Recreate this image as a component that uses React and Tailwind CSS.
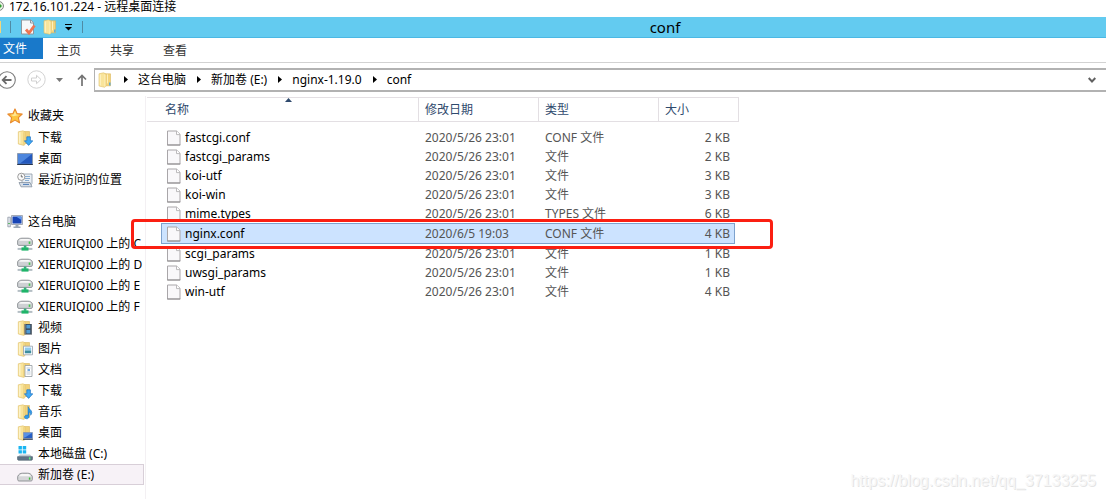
import React from "react";

/* ---------- icons ---------- */

function Svg({ children, className = "size-4", box = "0 0 16 16" }) {
  return (
    <svg viewBox={box} className={"shrink-0 " + className} aria-hidden="true">
      {children}
    </svg>
  );
}

function FolderShape() {
  return (
    <>
      <path d="M6 1.500h6.500v12H6z" fill="#f1d27a" stroke="#dcb75c" strokeWidth=".6" />
      <path d="M1.300 1.800 6 .8l2 1v12.700l-1.200.9L1.300 14z" fill="#f9e49b" stroke="#dfbf6a" strokeWidth=".6" />
      <path d="M2 2.500 3.500 2v11.500L2 13.200z" fill="#fdf3c8" />
      <path d="M6.800 2.200v12.600" stroke="#eccd74" strokeWidth=".9" />
    </>
  );
}

function FolderIcon({ className }) {
  return (
    <Svg className={className}>
      <path d="M7 1.800h6.500v12H7z" fill="#f3d47c" stroke="#dcb75c" strokeWidth=".6" />
      <path d="M2 1.800 6.500.8l2.200 1v12.600l-1 .9L2 14z" fill="#f9e49b" stroke="#dfbf6a" strokeWidth=".6" />
      <path d="M3.300 2.500v11" stroke="#fdf3c8" />
      <path d="M8 2.500v12M10.500 2.400v9" stroke="#fff3c4" strokeWidth=".9" />
      <path d="M12.800 10.500v3" stroke="#52a9dc" strokeWidth="1.400" />
    </Svg>
  );
}

function DownloadIcon() {
  return (
    <Svg>
      <FolderShape />
      <path d="M9.800 6.800h3.600v4h2.400l-4.200 4.600-4.200-4.600h2.400z" fill="#3fa9f5" stroke="#1a6fc0" strokeWidth=".7" />
    </Svg>
  );
}

function DesktopIcon() {
  return (
    <Svg>
      <path d="M.5 2.500h15v10.800H.5z" fill="#2459bd" stroke="#8d9bb0" />
      <path d="M1 3h14L3 12.600H1z" fill="#4d86dd" />
      <path d="M.2 13h15.600v1H.2z" fill="#27364f" />
    </Svg>
  );
}

function RecentIcon() {
  return (
    <Svg>
      <path d="M5 2h10v9.500l-1.200 1.500H5z" fill="#e9eff5" stroke="#8d99a6" strokeWidth=".8" />
      <path d="M8 4.500h5M8 6.500h5M8 8.500h4" stroke="#7fa6ce" strokeWidth=".9" />
      <path d="M2 10.500h11l2 4.300H4z" fill="#d5dde6" stroke="#8592a0" strokeWidth=".8" />
      <path d="M6 12.400h6" stroke="#4b7cb8" />
      <circle cx="4.300" cy="4.800" r="3.600" fill="#fbfbfb" stroke="#9b9b9b" />
      <path d="M4.300 2.700v2.200H6" stroke="#555" strokeWidth=".8" fill="none" />
    </Svg>
  );
}

function StarIcon() {
  return (
    <Svg>
      <path
        d="M8 .9 10.100 5.600l5.100.5-3.800 3.500 1.100 5.200L8 12.100l-4.500 2.700 1.100-5.200L.8 6.100l5.100-.5z"
        fill="#fdc53f"
        stroke="#e8882c"
        strokeWidth="1.100"
        strokeLinejoin="round"
      />
      <path d="M8 3.200 9.300 6.600l3 .3-5.800 1.400-2.800-1.500 2.900-.3z" fill="#ffe795" />
    </Svg>
  );
}

function ComputerIcon() {
  return (
    <Svg>
      <path d="M.8 3.200h2.600v9.600H.8z" fill="#dde2ea" stroke="#8b93a1" strokeWidth=".7" />
      <path d="M1.200 9.500h1.600" stroke="#45b14c" />
      <path d="M4.500 1.500h11v9h-11z" fill="#e7eaf0" stroke="#8f97a5" strokeWidth=".8" />
      <path d="M5.500 2.500h9v7h-9z" fill="#1744b6" />
      <path d="M9 2.500h5.500v3.400z" fill="#5f97ee" />
      <path d="M8.500 11h3v1.600h-3zM6.500 12.600h7v1.500h-7z" fill="#9ba7b5" />
    </Svg>
  );
}

function NetDriveIcon() {
  return (
    <Svg>
      <path d="M.6 4.800C1.300 3 3 2.200 5 2.200h6c2 0 3.700.8 4.400 2.600v3.500c0 .7-.6 1.100-1.300 1.100H1.900C1.200 9.400.6 9 .6 8.300z" fill="#cfd1d4" stroke="#7e8388" strokeWidth=".8" />
      <path d="M2 4.700C3 3.300 4 3 5.500 3h5c1.500 0 2.500.3 3.500 1.700z" fill="#f8f8f8" />
      <path d="M12.500 5.500v2.400" stroke="#41c64b" strokeWidth="1.600" />
      <path d="M6.800 9.600h2.600v2.300H6.800z" fill="#31b27a" />
      <path d="M.6 12.900h14.800" stroke="#b4bec4" strokeWidth="2" />
      <path d="M4.500 11.400h7v3.200h-7z" fill="#1fb469" />
    </Svg>
  );
}

function VideoIcon() {
  return (
    <Svg>
      <FolderShape />
      <path d="M7.500 4h7.500v10.500H7.500z" fill="#333d48" />
      <path d="M9.300 4.800h4v3.800h-4zM9.300 9.800h4v3.800h-4z" fill="#4e9bd6" />
      <path d="M8.300 4.500v9.800M14.300 4.500v9.800" stroke="#d6dce2" strokeWidth=".8" strokeDasharray="1 1" />
    </Svg>
  );
}

function PictureIcon() {
  return (
    <Svg>
      <FolderShape />
      <path d="M6.500 5.200h9v8.600h-9z" fill="#fff" stroke="#94a0ac" strokeWidth=".8" />
      <path d="M7.800 6.500h6.400v3H7.800z" fill="#8fcbed" />
      <path d="M7.800 9.500h6.400v2.800H7.800z" fill="#3d8e9f" />
    </Svg>
  );
}

function DocumentIcon() {
  return (
    <Svg>
      <FolderShape />
      <path d="M8 3.500h7v11H8z" fill="#fff" stroke="#9299a0" strokeWidth=".8" />
      <path d="M9.500 6h4M9.500 10h4M9.500 12h4" stroke="#aab7c4" strokeWidth=".8" />
      <path d="M10.500 8h2.500" stroke="#3b86cd" strokeWidth="1.400" />
    </Svg>
  );
}

function MusicIcon() {
  return (
    <Svg>
      <FolderShape />
      <path d="M11 2.500c.3 2.500 3.800 3 3.800 6 0 1.300-.7 2.200-1.200 2.800.3-2-.6-3-1.600-3.500v4.700c0 3-4.500 3-4.500.6 0-1.700 1.800-2.400 3.500-1.900z" fill="#2f9aea" stroke="#176bb5" strokeWidth=".5" />
    </Svg>
  );
}

function DesktopFolderIcon() {
  return (
    <Svg>
      <FolderShape />
      <path d="M6.500 7.500h9v6h-9z" fill="#275fc4" stroke="#8c9bb2" strokeWidth=".8" />
      <path d="M7 8h8l-7 4.500H7z" fill="#5a92e4" />
      <path d="M6 14.300h9.800" stroke="#24344f" />
    </Svg>
  );
}

function SystemDriveIcon() {
  return (
    <Svg>
      <path d="M1.500 0h3.400v3.400H1.500zM5.700 0h3.500v3.400H5.700zM1.500 4.200h3.400v3.400H1.500zM5.700 4.200h3.500v3.400H5.700z" fill="#19b5f1" />
      <path d="M3 8.600h10l2.500 2.400H.5z" fill="#bcc7cf" />
      <path d="M.5 10.700h15v2.200c0 .9-.5 1.400-1.300 1.400H1.800c-.8 0-1.300-.5-1.300-1.400z" fill="#5e7486" stroke="#536370" strokeWidth=".6" />
      <path d="M12.700 11.300v2.200" stroke="#5cf07f" strokeWidth="1.500" />
    </Svg>
  );
}

function DriveIcon() {
  return (
    <Svg>
      <path d="M.7 9.500C1.700 7 3.500 6.200 5.500 6.200h5c2 0 3.800.8 4.800 3.300v3c0 1-.6 1.500-1.500 1.500H2.200c-.9 0-1.500-.5-1.500-1.500z" fill="#d5d6d8" stroke="#7c8084" strokeWidth=".8" />
      <path d="M2 9.300C3 7.500 4 7 5.500 7h5c1.500 0 2.500.5 3.500 2.300z" fill="#f6f6f6" />
      <path d="M12.600 10.500v2.200" stroke="#3dba3d" strokeWidth="1.500" />
    </Svg>
  );
}

function FileIcon() {
  return (
    <Svg className="h-4 w-[14px]" box="0 0 14 16">
      <path d="M.5 1h9l3.500 3.200V15H.5z" fill="#f9f8fa" stroke="#a9a6a9" />
      <path d="M9.500 1v3.600h3.500" fill="#fff" stroke="#b4b2b4" strokeWidth=".9" />
      <path d="M.2 15h13.100" stroke="#8f8d8f" />
    </Svg>
  );
}

function PropertiesIcon() {
  return (
    <Svg>
      <path d="M1.500 1h9.300l2.700 2.700V15h-12z" fill="#f7f8fa" stroke="#8e979e" />
      <path d="M10.500 1v3h3" fill="none" stroke="#8e979e" />
      <path d="m6 10.500 3 3.500L14.500 6.500" fill="none" stroke="#ee7452" strokeWidth="2.800" />
    </Svg>
  );
}

function Crumb({ children }) {
  return (
    <>
      <Svg className="ml-[11px] h-[7px] w-1" box="0 0 4 7">
        <path d="M0 0v7l4-3.500z" fill="#000" />
      </Svg>
      <button type="button" className="ml-[10px] whitespace-nowrap">{children}</button>
    </>
  );
}

/* ---------- data ---------- */

const favorites = [
  { label: "下载", Icon: DownloadIcon },
  { label: "桌面", Icon: DesktopIcon },
  { label: "最近访问的位置", Icon: RecentIcon },
];

const computer = [
  { label: "XIERUIQI00 上的 C", Icon: NetDriveIcon },
  { label: "XIERUIQI00 上的 D", Icon: NetDriveIcon },
  { label: "XIERUIQI00 上的 E", Icon: NetDriveIcon },
  { label: "XIERUIQI00 上的 F", Icon: NetDriveIcon },
  { label: "视频", Icon: VideoIcon },
  { label: "图片", Icon: PictureIcon },
  { label: "文档", Icon: DocumentIcon },
  { label: "下载", Icon: DownloadIcon },
  { label: "音乐", Icon: MusicIcon },
  { label: "桌面", Icon: DesktopFolderIcon },
  { label: "本地磁盘 (C:)", Icon: SystemDriveIcon },
  { label: "新加卷 (E:)", Icon: DriveIcon, selected: true },
];

const files = [
  ["fastcgi.conf", "2020/5/26 23:01", "CONF 文件", "2 KB"],
  ["fastcgi_params", "2020/5/26 23:01", "文件", "2 KB"],
  ["koi-utf", "2020/5/26 23:01", "文件", "3 KB"],
  ["koi-win", "2020/5/26 23:01", "文件", "3 KB"],
  ["mime.types", "2020/5/26 23:01", "TYPES 文件", "6 KB"],
  ["nginx.conf", "2020/6/5 19:03", "CONF 文件", "4 KB"],
  ["scgi_params", "2020/5/26 23:01", "文件", "1 KB"],
  ["uwsgi_params", "2020/5/26 23:01", "文件", "1 KB"],
  ["win-utf", "2020/5/26 23:01", "文件", "4 KB"],
];

/* ---------- sections ---------- */

function TitleBar() {
  return (
    <>
      <div className="flex h-[17px] items-start gap-[5px]">
        <Svg className="h-3 w-1" box="0 0 4 12">
          <circle cx="-1" cy="6" r="4.500" fill="#e4f1df" stroke="#858585" />
          <path d="M0 4l2 2-2 2z" fill="#2f9e2f" />
        </Svg>
        <span className="text-xs leading-[14px] whitespace-nowrap">172.16.101.224 - 远程桌面连接</span>
      </div>
      <div className="flex h-[21px] items-center border-b border-[#4bb8e4] bg-[#63cbf0]">
        <div className="flex w-[224px] shrink-0 items-center">
          <span className="h-3 w-px bg-[#f3d67c]" />
          <span className="ml-[9px] h-3 w-px bg-[#4f8ba5]" />
          <button type="button" aria-label="属性" className="ml-[9px]"><PropertiesIcon /></button>
          <button type="button" aria-label="新建文件夹" className="ml-[6px]"><FolderIcon /></button>
          <button type="button" aria-label="自定义快速访问工具栏" className="ml-[7px]">
            <Svg className="h-[7px] w-[7px]" box="0 0 7 7">
              <path d="M0 .5h7" stroke="#000" />
              <path d="M0 3h7L3.500 6.500z" fill="#000" />
            </Svg>
          </button>
          <span className="ml-[10px] h-3 w-px bg-[#4f8ba5]" />
        </div>
        <h1 className="flex-1 text-center text-[15px] leading-5">conf</h1>
      </div>
    </>
  );
}

function Ribbon() {
  return (
    <nav className="flex h-[25px] items-start border-b border-[#d2d2d2] leading-[21px]">
      <button type="button" className="w-[43px] bg-[#1979ca] pl-[3px] text-left text-white">文件</button>
      <div className="ml-[14px] flex gap-[29px] pt-[2px] text-[#333]">
        <button type="button">主页</button>
        <button type="button">共享</button>
        <button type="button">查看</button>
      </div>
    </nav>
  );
}

function AddressRow() {
  return (
    <div className="flex h-[33px] items-center">
      <div className="flex w-[94px] shrink-0 items-center">
        <button type="button" aria-label="后退">
          <Svg className="h-[18px] w-4" box="0 0 16 18">
            <circle cx="7" cy="9" r="8.300" fill="none" stroke="#7c7c7c" strokeWidth="1.100" />
            <path d="M11.500 9H3M6.500 5.200 2.700 9l3.800 3.800" fill="none" stroke="#6a6a6a" strokeWidth="1.800" />
          </Svg>
        </button>
        <button type="button" aria-label="前进" className="ml-[11px]">
          <Svg className="size-[19px]" box="0 0 19 19">
            <circle cx="9.500" cy="9.500" r="8.700" fill="none" stroke="#d2d2d2" />
            <path d="M4.500 8h5V5.300l4.500 4.200-4.500 4.200V11h-5z" fill="none" stroke="#d0d0d0" />
          </Svg>
        </button>
        <button type="button" aria-label="最近浏览的位置" className="ml-[10px]">
          <Svg className="h-1 w-[7px]" box="0 0 7 4"><path d="M0 0h7L3.500 4z" fill="#777" /></Svg>
        </button>
        <button type="button" aria-label="上移" className="ml-[14px]">
          <Svg className="h-3 w-[10px]" box="0 0 10 12">
            <path d="M5 12V2M1 5.500l4-4 4 4" fill="none" stroke="#737373" strokeWidth="1.700" />
          </Svg>
        </button>
      </div>
      <div className="flex h-6 flex-1 items-center border-y-2 border-l border-[#b2b2b2] pl-[2px] leading-5">
        <FolderIcon />
        <Crumb>这台电脑</Crumb>
        <Crumb>新加卷 (E:)</Crumb>
        <Crumb>nginx-1.19.0</Crumb>
        <Crumb>conf</Crumb>
        <button type="button" aria-label="历史地址" className="mr-[10px] ml-auto">
          <Svg className="h-[6px] w-2" box="0 0 8 6">
            <path d="M.7 1 4 4.500 7.300 1" fill="none" stroke="#606060" strokeWidth="1.900" />
          </Svg>
        </button>
      </div>
    </div>
  );
}

function SideGroup({ title, Icon, items }) {
  return (
    <section>
      <h2 className="flex h-[22px] items-center gap-[5px] pl-[7px]">
        <Icon />
        {title}
      </h2>
      <ul>
        {items.map((item, i) => (
          <li key={i}>
            <a
              href="#"
              className={
                item.selected
                  ? "mr-px flex h-[21px] items-center gap-[5px] border-y border-r border-[#d8cfd8] bg-[#f7f2f7] pl-[17px] whitespace-nowrap"
                  : "flex h-[21px] items-center gap-[5px] pl-[17px] whitespace-nowrap"
              }
            >
              <item.Icon />
              {item.label}
            </a>
          </li>
        ))}
      </ul>
    </section>
  );
}

function FileTable() {
  const head = "border-r border-[#e3dfe3] pl-[6px] text-left font-normal";
  return (
    <table className="block w-[592px] text-[#555]">
      <thead className="block">
        <tr className="flex h-[25px] border-y border-[#e3dfe3] leading-[23px] text-[#2f4a6d]">
          <th className="relative w-[272px] border-r border-[#e3dfe3] pl-[18px] text-left font-normal">
            名称
            <Svg className="absolute top-0 left-[138px] h-1 w-[7px]" box="0 0 7 4">
              <path d="M0 4h7L3.500 0z" fill="#2f4a6d" />
            </Svg>
          </th>
          <th className={head + " w-[120px]"}>修改日期</th>
          <th className={head + " w-[120px]"}>类型</th>
          <th className={head + " w-[80px]"}>大小</th>
        </tr>
      </thead>
      <tbody className="block pt-[6px] pr-[4px] pl-[14px]">
        {files.map(([name, date, type, size]) => {
          const selected = name === "nginx.conf";
          return (
            <tr
              key={name}
              className={
                selected
                  ? "relative flex h-[21px] border border-[#7da2ce] bg-[#cce3ff] leading-[19px]"
                  : "flex h-[19px] border-x border-transparent leading-[19px]"
              }
            >
              <td className="flex min-w-0 flex-1 items-center gap-1 pl-[5px] text-black">
                <FileIcon />
                {name}
              </td>
              <td className="w-[120px]">{date}</td>
              <td className="w-[120px]">{type}</td>
              <td className="w-[69px] pr-[4px] text-right">
                {size}
                {selected && (
                  <span className="pointer-events-none absolute -top-[5px] -right-[39px] -bottom-[6px] -left-[31px] rounded border-3 border-[#fb1f12]" />
                )}
              </td>
            </tr>
          );
        })}
      </tbody>
    </table>
  );
}

export default function App() {
  return (
    <div className="relative flex min-h-screen flex-col bg-white font-['Noto_Sans','Noto_Sans_CJK_SC',sans-serif] text-xs text-black">
      <header>
        <TitleBar />
        <Ribbon />
        <AddressRow />
      </header>
      <div className="flex flex-1">
        <aside className="flex w-[146px] shrink-0 flex-col gap-[21px] overflow-hidden border-r border-[#f3f0f3] pt-[9px]">
          <SideGroup title="收藏夹" Icon={StarIcon} items={favorites} />
          <SideGroup title="这台电脑" Icon={ComputerIcon} items={computer} />
        </aside>
        <main className="min-w-0 flex-1 pt-px pl-px">
          <FileTable />
        </main>
      </div>
      <p className="absolute right-[10px] bottom-2 font-['Liberation_Sans',sans-serif] text-base leading-5 text-[#f7f7f7] [text-shadow:1px_1px_0_#e4e4e4]">
        https://blog.csdn.net/qq_37133255
      </p>
    </div>
  );
}
